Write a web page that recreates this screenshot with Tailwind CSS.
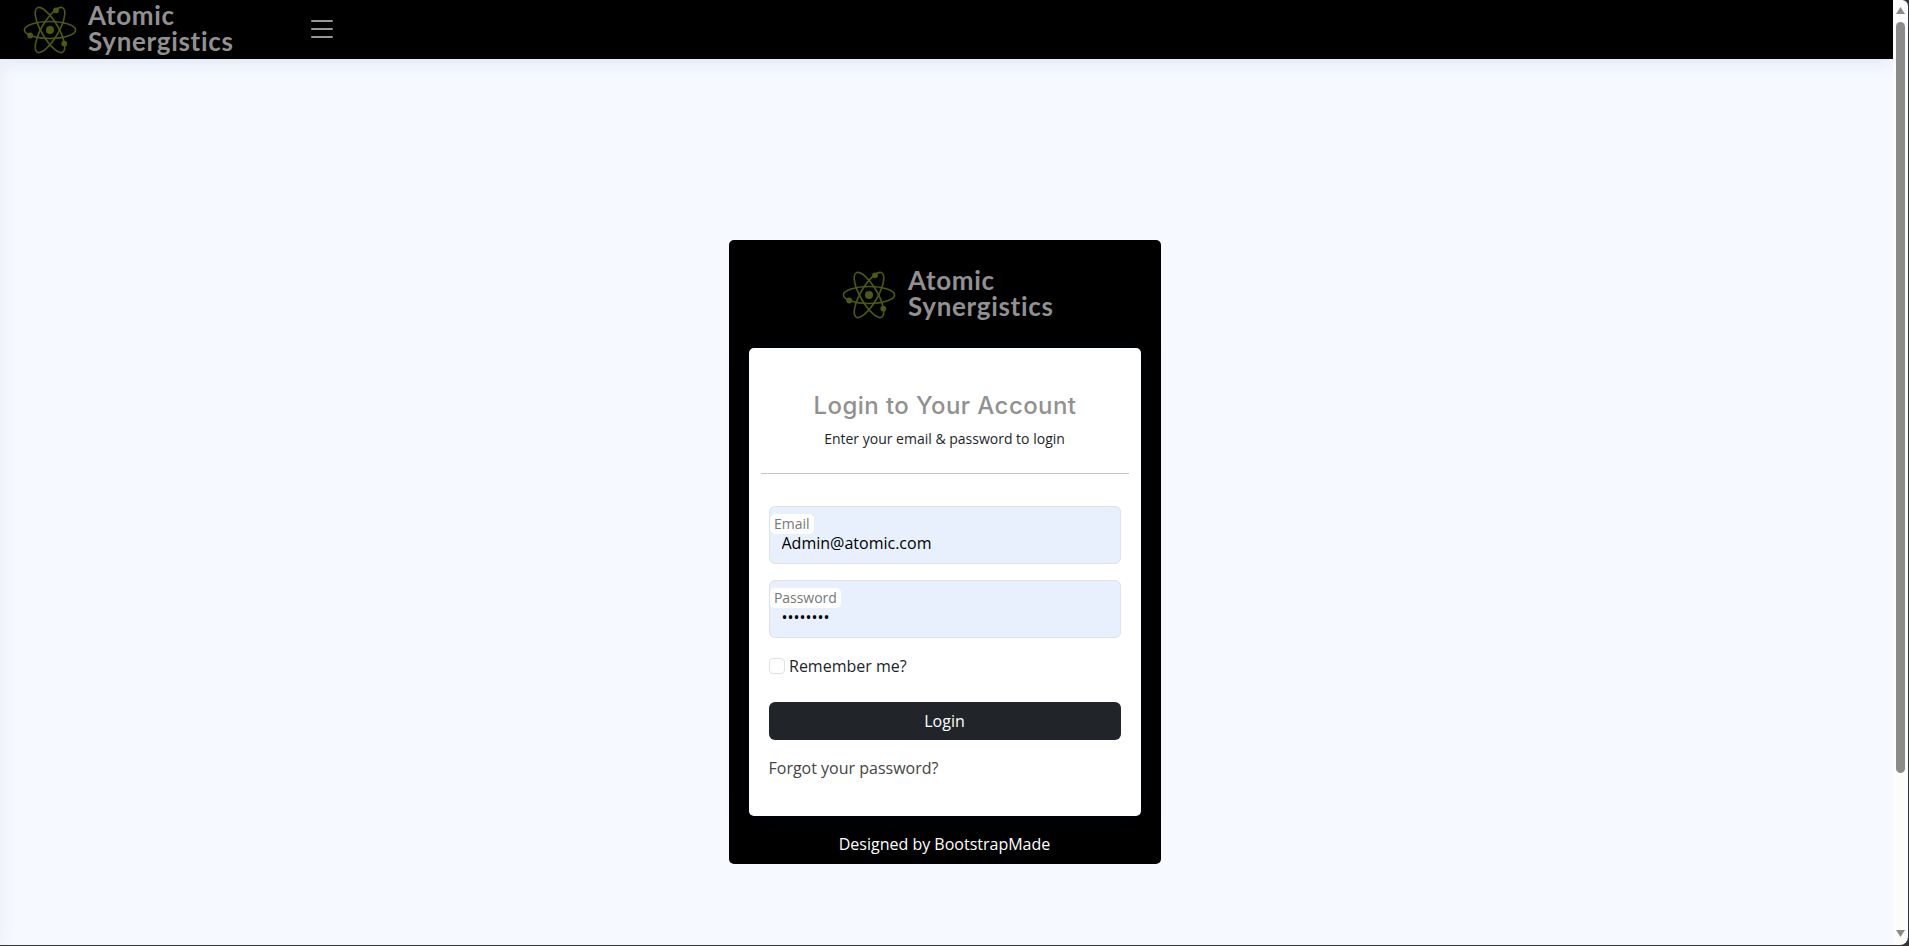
<!DOCTYPE html>
<html lang="en">
<head>
<meta charset="utf-8">
<title>Atomic Synergistics - Login</title>
<script src="https://cdn.jsdelivr.net/npm/@tailwindcss/browser@4"></script>
</head>
<body class="h-[946px] overflow-hidden bg-[#333436] pr-px pb-px font-['Open_Sans',sans-serif] text-base text-[#212529]">
<svg class="hidden">
  <symbol id="atom" viewBox="0 0 56 50">
    <g fill="none" stroke="#4a5a15" stroke-width="1.6">
      <ellipse cx="28" cy="25" rx="25.6" ry="8.5"/>
      <ellipse cx="28" cy="25" rx="25.6" ry="8.5" transform="rotate(60 28 25)"/>
      <ellipse cx="28" cy="25" rx="25.6" ry="8.5" transform="rotate(-60 28 25)"/>
    </g>
    <g fill="#4a5a15">
      <circle cx="28" cy="25" r="4"/>
      <circle cx="34" cy="5.3" r="2.9"/>
      <circle cx="8.2" cy="30.5" r="2.9"/>
      <circle cx="42.3" cy="38.6" r="2.9"/>
    </g>
  </symbol>
</svg>
<div class="flex h-[945px] overflow-hidden rounded-br-lg rounded-tr-md bg-[#fcfcfc]">
  <div class="relative flex flex-1 flex-col overflow-hidden bg-[#f6f9ff]">
    <header class="z-10 flex h-[59px] shrink-0 items-center bg-black pb-0.5 shadow-[0_2px_20px_rgba(1,41,112,0.1)]">
      <div class="flex w-[306px] items-center pl-[21.5px]">
        <svg class="mt-[3px] h-[50px] w-14"><use href="#atom"/></svg>
        <div class="mb-0.5 ml-[10.5px] font-[Lato,sans-serif] text-[26px] leading-[26px] font-bold tracking-[0.68px] text-[#919191]"><div>Atomic</div><div>Synergistics</div></div>
      </div>
      <svg class="size-8" viewBox="0 0 32 32" stroke="#999" stroke-width="2" stroke-linecap="round"><path d="M6 8h20M6 16h20M6 24h20"/></svg>
    </header>
    <aside class="absolute top-[59px] bottom-0 -left-[300px] w-[300px] shadow-[0_0_20px_rgba(1,41,112,0.06)]"></aside>
    <main class="flex flex-1 justify-center pt-[181px] pr-[3px]">
      <section class="flex h-[624px] w-[432px] flex-col rounded-[5px] bg-black px-5">
        <div class="flex h-[108px] items-center pl-[92px]">
          <svg class="mt-0.5 h-[50px] w-14"><use href="#atom"/></svg>
          <div class="mb-0.5 ml-[11px] font-[Lato,sans-serif] text-[26px] leading-[26px] font-bold tracking-[0.68px] text-[#919191]"><div>Atomic</div><div>Synergistics</div></div>
        </div>
        <div class="h-[468px] rounded-[5px] bg-white px-3 shadow-[0_0_30px_rgba(1,41,112,0.1)]">
          <h1 class="pt-10 text-center font-[Inter,sans-serif] text-2xl leading-9 font-medium tracking-[0.42px] text-[#919191]">Login to Your Account</h1>
          <p class="mt-1 -ml-px text-center text-sm leading-[21px]">Enter your email &amp; password to login</p>
          <div class="mt-6 h-px bg-[#c5c6c7]"></div>
          <form class="flex flex-col px-2 pt-8">
            <div class="relative h-[58px]">
              <input type="text" value="Admin@atomic.com" class="block h-[58px] w-full rounded-md border border-[#dee2e6] bg-[#e8f0fe] pt-[21px] pr-3 pb-1.5 pl-[11.5px] text-black">
              <label class="absolute top-2 left-px h-5 rounded-[5px] bg-white px-1 text-sm leading-5 text-[#76787a]">Email</label>
            </div>
            <div class="relative mt-4 h-[58px]">
              <input type="password" value="password" class="block h-[58px] w-full rounded-md border border-[#dee2e6] bg-[#e8f0fe] pt-[21px] pr-3 pb-1.5 pl-[11.5px] text-black">
              <label class="absolute top-2 left-px h-5 rounded-[5px] bg-white px-1 text-sm leading-5 tracking-[-0.05px] text-[#76787a]">Password</label>
            </div>
            <label class="mt-4 flex h-6 items-center gap-1"><span class="size-4 rounded border border-[#dee2e6] bg-white"></span>Remember me?</label>
            <button type="button" class="mt-6 h-[38px] rounded-md bg-[#212529] pr-px text-white">Login</button>
            <a class="mt-4 -ml-[0.5px] leading-6 text-[#444]">Forgot your password?</a>
          </form>
        </div>
        <p class="mt-4 -ml-px text-center leading-6 text-white">Designed by BootstrapMade</p>
      </section>
    </main>
  </div>
  <div class="flex w-[15px] flex-col items-center">
    <svg class="mt-[7px] h-[7px] w-[9px]" fill="#8b8b8b"><path d="M4.5 0 9 7H0Z"/></svg>
    <div class="mt-2 h-[751px] w-[9px] rounded-full bg-[#8b8b8b]"></div>
    <svg class="mt-[157px] h-[7px] w-[9px]" fill="#8b8b8b"><path d="M0 0H9L4.5 7Z"/></svg>
  </div>
</div>
</body>
</html>
